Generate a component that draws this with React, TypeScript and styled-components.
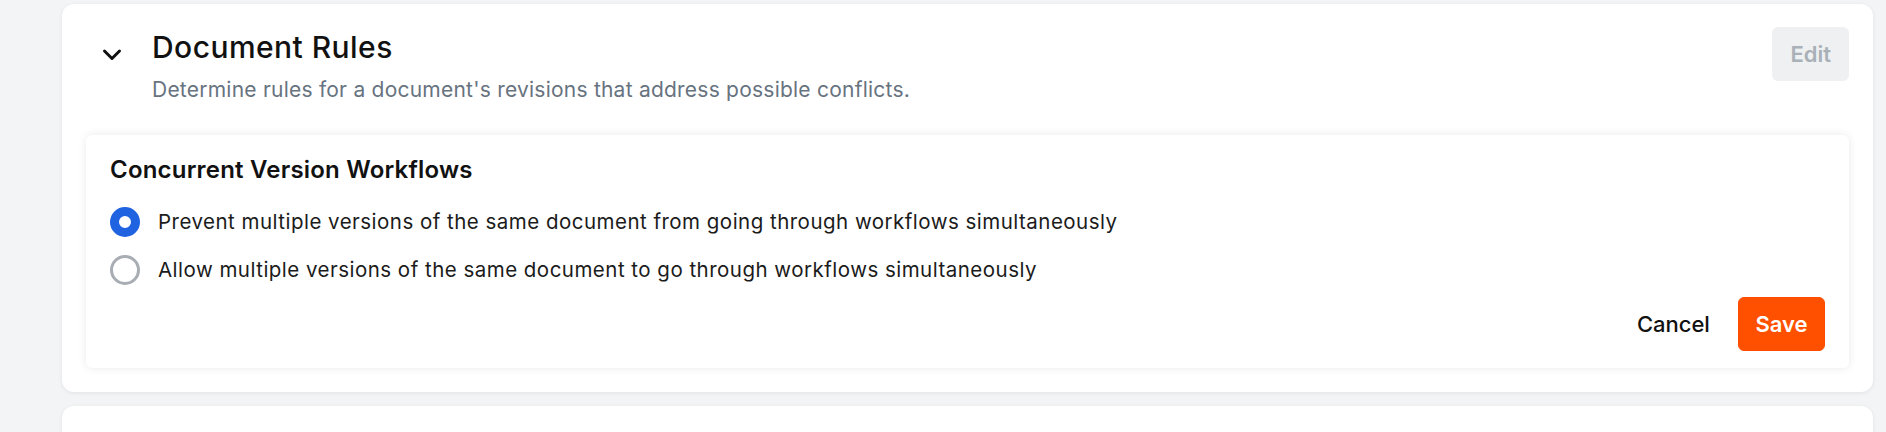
import React, { useState } from "react";
import styled, { createGlobalStyle } from "styled-components";

const GlobalStyle = createGlobalStyle`
  html, body {
    margin: 0;
    padding: 0;
    background: #f3f4f6;
    font-family: Inter, "Noto Sans", "Liberation Sans", sans-serif;
    -webkit-font-smoothing: antialiased;
  }
  * { box-sizing: border-box; }
`;

const Page = styled.div`
  background: #f3f4f6;
  height: 432px;
  overflow: hidden;
  padding: 4px 13px 0 62px;
  display: flex;
  flex-direction: column;
  gap: 14px;
`;

const Card = styled.section`
  background: #ffffff;
  border-radius: 12px;
  box-shadow: 0 1px 4px rgba(16, 24, 40, 0.08);
  padding: 24px;
  flex-shrink: 0;
`;

const EmptyCard = styled.div`
  background: #ffffff;
  border-radius: 12px;
  box-shadow: 0 1px 4px rgba(16, 24, 40, 0.08);
  height: 120px;
  flex-shrink: 0;
`;

const Header = styled.div`
  display: flex;
  align-items: flex-start;
`;

const ChevronButton = styled.button`
  background: none;
  border: none;
  padding: 20px 0 0 0;
  margin: 0 30px 0 16px;
  width: 20px;
  height: 40px;
  display: flex;
  align-items: flex-start;
  justify-content: center;
  color: #111111;
  cursor: pointer;
`;

const TitleBlock = styled.div`
  display: flex;
  flex-direction: column;
  flex: 1;
`;

const Title = styled.h2`
  margin: 0;
  font-size: 30px;
  line-height: 38px;
  font-weight: 500;
  letter-spacing: 0.45px;
  color: #111111;
`;

const Subtitle = styled.p`
  margin: 9px 0 0 0;
  font-size: 21px;
  line-height: 30px;
  font-weight: 400;
  letter-spacing: 0.23px;
  color: #67737f;
`;

const EditButton = styled.button`
  margin-top: -1px;
  height: 54px;
  padding: 0 18px;
  border: none;
  border-radius: 6px;
  background: #eef0f2;
  color: #a9b0b7;
  font-family: inherit;
  font-size: 22px;
  font-weight: 600;
`;

const Panel = styled.div`
  margin-top: 30px;
  background: #ffffff;
  border-radius: 6px;
  box-shadow: 0 0 8px rgba(16, 24, 40, 0.09);
  padding: 21px 24px 17px 24px;
  display: flex;
  flex-direction: column;
`;

const PanelHeading = styled.h3`
  margin: 0;
  font-size: 24px;
  line-height: 28px;
  font-weight: 600;
  letter-spacing: 0.2px;
  color: #111111;
`;

const OptionList = styled.div`
  margin-top: 23px;
  display: flex;
  flex-direction: column;
  gap: 18px;
`;

const OptionRow = styled.label`
  display: flex;
  align-items: center;
  gap: 18px;
  cursor: pointer;
  height: 30px;
`;

const RadioCircle = styled.span<{ $checked: boolean }>`
  width: 30px;
  height: 30px;
  border-radius: 50%;
  flex-shrink: 0;
  background: #ffffff;
  border: ${(p) => (p.$checked ? "9px solid #1f63e1" : "3px solid #a7adb3")};
`;

const OptionText = styled.span`
  font-size: 20.5px;
  line-height: 30px;
  letter-spacing: 0.48px;
  color: #1b1b1b;
`;

const Actions = styled.div`
  margin-top: 12px;
  display: flex;
  justify-content: flex-end;
  align-items: center;
  gap: 12px;
`;

const CancelButton = styled.button`
  height: 54px;
  padding: 0 16px;
  border: none;
  background: transparent;
  color: #111111;
  font-family: inherit;
  font-size: 22px;
  font-weight: 500;
`;

const SaveButton = styled.button`
  height: 54px;
  padding: 0 16.5px;
  border: 1px solid #ff4d00;
  border-radius: 6px;
  background: #ff5000;
  color: #ffffff;
  font-family: inherit;
  font-size: 22px;
  font-weight: 600;
`;

const ChevronDown = () => (
  <svg width="20" height="14" viewBox="0 0 20 14" fill="none">
    <path d="M2.5 3 L10 10.5 L17.5 3" stroke="currentColor" strokeWidth="3" strokeLinecap="round" strokeLinejoin="round" />
  </svg>
);

const options = [
  "Prevent multiple versions of the same document from going through workflows simultaneously",
  "Allow multiple versions of the same document to go through workflows simultaneously",
];

export default function App() {
  const [selected, setSelected] = useState(0);
  return (
    <>
      <GlobalStyle />
      <Page>
        <Card>
          <Header>
            <ChevronButton aria-label="Collapse">
              <ChevronDown />
            </ChevronButton>
            <TitleBlock>
              <Title>Document Rules</Title>
              <Subtitle>Determine rules for a document's revisions that address possible conflicts.</Subtitle>
            </TitleBlock>
            <EditButton disabled>Edit</EditButton>
          </Header>
          <Panel>
            <PanelHeading>Concurrent Version Workflows</PanelHeading>
            <OptionList>
              {options.map((o, i) => (
                <OptionRow key={i} onClick={() => setSelected(i)}>
                  <RadioCircle $checked={selected === i} />
                  <OptionText>{o}</OptionText>
                </OptionRow>
              ))}
            </OptionList>
            <Actions>
              <CancelButton>Cancel</CancelButton>
              <SaveButton>Save</SaveButton>
            </Actions>
          </Panel>
        </Card>
        <EmptyCard />
      </Page>
    </>
  );
}
